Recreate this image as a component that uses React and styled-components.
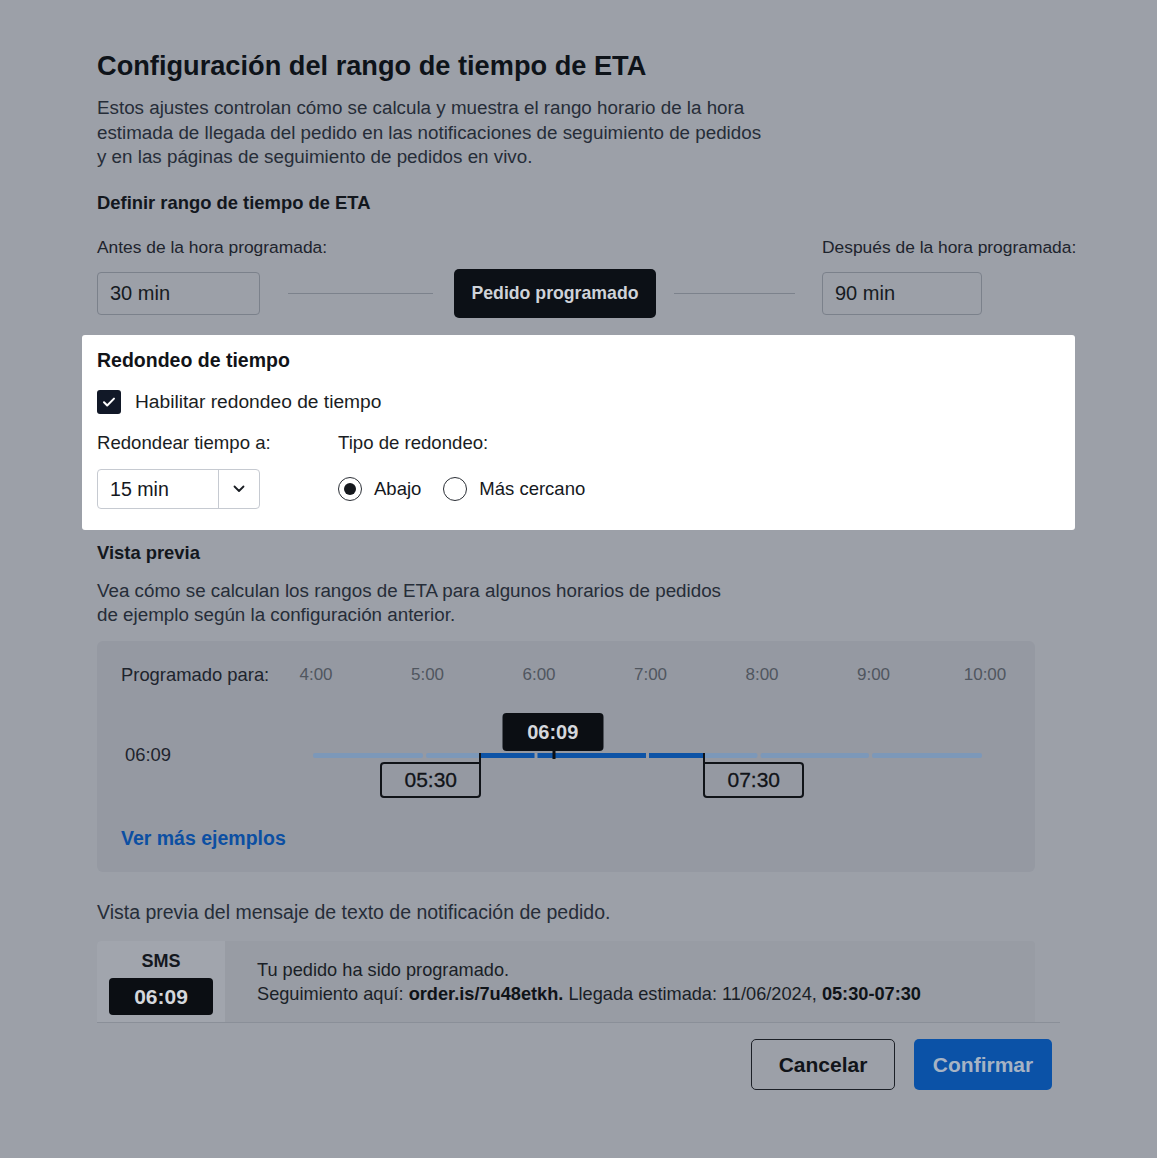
import React from "react";
import styled, { createGlobalStyle } from "styled-components";

const Global = createGlobalStyle`
  html, body { margin: 0; padding: 0; background: #9ca0a8; }
  body { font-family: "Liberation Sans", Arial, sans-serif; color: #1c222b; }
  * { box-sizing: border-box; }
`;

const Page = styled.div`
  width: 1157px;
  min-height: 1158px;
  padding: 50px 0 0 82px;
`;

const Column = styled.div`
  width: 993px;
`;

const Section = styled.div`
  padding: 0 15px;
`;

const Title = styled.h1`
  margin: 0;
  font-size: 27.2px;
  line-height: 32px;
  font-weight: 700;
  color: #0e1319;
`;

const Paragraph = styled.p`
  margin: ${(p) => p.$mt || 0}px 0 0;
  font-size: ${(p) => p.$fs || 18.8}px;
  line-height: ${(p) => p.$lh || 24}px;
  color: #262d38;
  white-space: nowrap;
`;

const Heading = styled.h2`
  margin: ${(p) => p.$mt || 0}px 0 0;
  font-size: ${(p) => p.$fs || 18.4}px;
  line-height: 24px;
  font-weight: 700;
  color: ${(p) => (p.$light ? "#111318" : "#13171d")};
`;

const LabelsRow = styled.div`
  margin-top: 22px;
  display: grid;
  grid-template-columns: 725px auto;
  font-size: 17.4px;
  line-height: 20px;
  color: #1e242d;
  white-space: nowrap;
`;

const ControlsRow = styled.div`
  margin-top: 12px;
  display: flex;
  align-items: center;
  height: 49px;
`;

const ValueBox = styled.div`
  width: ${(p) => p.$w}px;
  height: 43px;
  border: 1px solid #7b818b;
  border-radius: 4px;
  padding-left: 12px;
  display: flex;
  align-items: center;
  font-size: 20px;
  color: #161b22;
`;

const Connector = styled.div`
  width: ${(p) => p.$w}px;
  margin: 0 ${(p) => p.$mr}px 0 ${(p) => p.$ml}px;
  height: 1.5px;
  background: #7c828c;
`;

const DarkButton = styled.div`
  width: 202px;
  height: 49px;
  border-radius: 5px;
  background: #0c1016;
  color: #cfd3d9;
  font-size: 17.7px;
  font-weight: 700;
  display: flex;
  align-items: center;
  justify-content: center;
`;

const Highlight = styled.div`
  margin-top: 17px;
  background: #ffffff;
  border-radius: 3px;
  padding: 13px 15px 21px;
`;

const CheckRow = styled.label`
  margin-top: 18px;
  display: flex;
  align-items: center;
  gap: 14px;
  font-size: 19.2px;
  line-height: 24px;
  color: #1a1d23;
`;

const CheckBox = styled.span`
  width: 24px;
  height: 24px;
  border-radius: 3px;
  background: #111827;
  display: flex;
  align-items: center;
  justify-content: center;
`;

const FieldsRow = styled.div`
  margin-top: 18px;
  display: flex;
  gap: 78px;
`;

const Field = styled.div`
  width: ${(p) => p.$w || "auto"};
  display: flex;
  flex-direction: column;
  gap: 15px;
`;

const FieldLabel = styled.div`
  font-size: 18.6px;
  line-height: 22px;
  color: #1a1d23;
  white-space: nowrap;
`;

const Select = styled.div`
  width: 163px;
  height: 40px;
  border: 1px solid #c6cad1;
  border-radius: 4px;
  display: grid;
  grid-template-columns: 1fr 40px;
`;

const SelectValue = styled.div`
  display: flex;
  align-items: center;
  padding-left: 12px;
  font-size: 19.6px;
  color: #15181d;
  border-right: 1px solid #c6cad1;
`;

const SelectArrow = styled.div`
  display: flex;
  align-items: center;
  justify-content: center;
`;

const RadioGroup = styled.div`
  height: 40px;
  display: flex;
  align-items: center;
`;

const RadioOption = styled.label`
  display: flex;
  align-items: center;
  gap: 12px;
  margin-right: 22px;
  font-size: 18.5px;
  color: #15181d;
`;

const RadioCircle = styled.span`
  width: 24px;
  height: 24px;
  border-radius: 50%;
  border: 1.5px solid #2b2f36;
  display: flex;
  align-items: center;
  justify-content: center;
  &::after {
    content: "";
    width: 12px;
    height: 12px;
    border-radius: 50%;
    background: #15181d;
    display: ${(p) => (p.$checked ? "block" : "none")};
  }
`;

const TimelineCard = styled.div`
  margin-top: 14px;
  width: 938px;
  background: #9599a2;
  border-radius: 6px;
  padding: 24px 24px 23px;
`;

const ChartRow = styled.div`
  display: grid;
  grid-template-columns: 192px 669px;
  align-items: center;
  margin-top: ${(p) => p.$mt || 0}px;
`;

const RowLabel = styled.div`
  font-size: 18.4px;
  line-height: 20px;
  color: #1e242d;
  padding-left: ${(p) => p.$pl || 0}px;
`;

const Axis = styled.div`
  position: relative;
  height: 20px;
`;

const HourLabel = styled.span`
  position: absolute;
  top: 0;
  transform: translateX(-50%);
  font-size: 17px;
  line-height: 20px;
  color: #50565f;
  white-space: nowrap;
`;

const Canvas = styled.div`
  position: relative;
  height: 100px;
`;

const Track = styled.svg`
  position: absolute;
  left: 0;
  top: 48px;
  display: block;
`;

const Tooltip = styled.div`
  position: absolute;
  top: 8px;
  width: 101px;
  height: 38px;
  transform: translateX(-50%);
  background: #0b0e13;
  border-radius: 4px;
  color: #d4d7dc;
  font-size: 20px;
  font-weight: 700;
  display: flex;
  align-items: center;
  justify-content: center;
  &::after {
    content: "";
    position: absolute;
    left: 50%;
    bottom: -8px;
    width: 2.5px;
    height: 8px;
    background: #0b0e13;
  }
`;

const MarkerLine = styled.div`
  position: absolute;
  top: 48px;
  width: 2px;
  height: 11px;
  background: #101318;
`;

const MarkerBox = styled.div`
  position: absolute;
  top: 57px;
  width: 101px;
  height: 36px;
  border: 2px solid #101318;
  border-radius: ${(p) => (p.$side === "left" ? "4px 0 4px 4px" : "0 4px 4px 4px")};
  font-size: 21px;
  color: #111419;
  -webkit-text-stroke: 0.3px #111419;
  display: flex;
  align-items: center;
  justify-content: center;
`;

const MoreLink = styled.a`
  display: block;
  margin-top: 22px;
  font-size: 19.5px;
  line-height: 22px;
  font-weight: 700;
  color: #0c4fa2;
  text-decoration: none;
`;

const SmsCard = styled.div`
  margin-top: 19px;
  width: 938px;
  height: 81px;
  display: flex;
  background: #989ca4;
  border-radius: 4px 4px 0 0;
  overflow: hidden;
`;

const SmsSide = styled.div`
  width: 128px;
  background: #a1a5ad;
  display: flex;
  flex-direction: column;
  align-items: center;
  padding-top: 10px;
  gap: 6px;
`;

const SmsTag = styled.div`
  font-size: 18px;
  line-height: 21px;
  font-weight: 700;
  color: #14181e;
`;

const TimeBadge = styled.div`
  width: 104px;
  height: 37px;
  border-radius: 4px;
  background: #0b0e13;
  color: #d4d7dc;
  font-size: 21px;
  font-weight: 700;
  display: flex;
  align-items: center;
  justify-content: center;
`;

const SmsBody = styled.div`
  padding: 17px 0 0 32px;
  font-size: 18.2px;
  line-height: 24px;
  color: #1a1f27;
  white-space: nowrap;
  b { color: #0f1318; }
`;

const Footer = styled.div`
  width: 963px;
  border-top: 1px solid #8a8f98;
  padding: 16px 8px 0 0;
  display: flex;
  justify-content: flex-end;
  gap: 19px;
`;

const Button = styled.button`
  height: 51px;
  width: ${(p) => p.$w}px;
  border-radius: 5px;
  font-family: "Liberation Sans", Arial, sans-serif;
  font-size: 21px;
  font-weight: 700;
  cursor: pointer;
  border: ${(p) => (p.$primary ? "none" : "1.5px solid #1c2027")};
  background: ${(p) => (p.$primary ? "#0b52a7" : "transparent")};
  color: ${(p) => (p.$primary ? "#a6b3c4" : "#111419")};
`;

const HOUR = 111.5;
const TRACK_W = 669;
const hours = ["4:00", "5:00", "6:00", "7:00", "8:00", "9:00", "10:00"];

function TrackBar({ from, to }) {
  const segs = [];
  for (let i = 0; i < 6; i++) {
    const s = i * HOUR + (i > 0 ? 1.5 : 0);
    const e = i === 5 ? TRACK_W : (i + 1) * HOUR - 1.5;
    segs.push([s, e]);
  }
  return (
    <Track width={TRACK_W} height={5} viewBox={`0 0 ${TRACK_W} 5`}>
      {segs.map(([s, e], i) => (
        <rect key={"l" + i} x={s} y={0} width={e - s} height={5} rx={2} fill="#7c98b9" />
      ))}
      {segs.map(([s, e], i) => {
        const a = Math.max(s, from);
        const b = Math.min(e, to);
        if (b <= a) return null;
        return <rect key={"d" + i} x={a} y={0} width={b - a} height={5} fill="#0d53a6" />;
      })}
    </Track>
  );
}

export default function App() {
  const start = 1.5 * HOUR;
  const end = 3.5 * HOUR;
  const now = (2 + 9 / 60) * HOUR;
  return (
    <>
      <Global />
      <Page>
        <Column>
          <Section>
            <Title>Configuración del rango de tiempo de ETA</Title>
            <Paragraph $mt={14} $lh={24.5}>
              Estos ajustes controlan cómo se calcula y muestra el rango horario de la hora
              <br />
              estimada de llegada del pedido en las notificaciones de seguimiento de pedidos
              <br />y en las páginas de seguimiento de pedidos en vivo.
            </Paragraph>
            <Heading $mt={21.5}>Definir rango de tiempo de ETA</Heading>
            <LabelsRow>
              <span>Antes de la hora programada:</span>
              <span>Después de la hora programada:</span>
            </LabelsRow>
            <ControlsRow>
              <ValueBox $w={163}>30 min</ValueBox>
              <Connector $w={145} $ml={28} $mr={21} />
              <DarkButton>Pedido programado</DarkButton>
              <Connector $w={121} $ml={18} $mr={27} />
              <ValueBox $w={160}>90 min</ValueBox>
            </ControlsRow>
          </Section>

          <Highlight>
            <Heading $light $fs={19.5}>Redondeo de tiempo</Heading>
            <CheckRow>
              <CheckBox>
                <svg width="16" height="16" viewBox="0 0 16 16" fill="none">
                  <path d="M3 8.3l3.2 3.2L13 4.6" stroke="#fff" strokeWidth="2" strokeLinecap="round" strokeLinejoin="round" />
                </svg>
              </CheckBox>
              Habilitar redondeo de tiempo
            </CheckRow>
            <FieldsRow>
              <Field $w="163px">
                <FieldLabel>Redondear tiempo a:</FieldLabel>
                <Select>
                  <SelectValue>15 min</SelectValue>
                  <SelectArrow>
                    <svg width="12" height="8" viewBox="0 0 12 8" fill="none">
                      <path d="M1.5 1.5L6 6l4.5-4.5" stroke="#1a1d23" strokeWidth="1.8" strokeLinecap="round" strokeLinejoin="round" />
                    </svg>
                  </SelectArrow>
                </Select>
              </Field>
              <Field>
                <FieldLabel>Tipo de redondeo:</FieldLabel>
                <RadioGroup>
                  <RadioOption>
                    <RadioCircle $checked />
                    Abajo
                  </RadioOption>
                  <RadioOption>
                    <RadioCircle />
                    Más cercano
                  </RadioOption>
                </RadioGroup>
              </Field>
            </FieldsRow>
          </Highlight>

          <Section>
            <Heading $mt={11}>Vista previa</Heading>
            <Paragraph $mt={14}>
              Vea cómo se calculan los rangos de ETA para algunos horarios de pedidos
              <br />
              de ejemplo según la configuración anterior.
            </Paragraph>
            <TimelineCard>
              <ChartRow>
                <RowLabel>Programado para:</RowLabel>
                <Axis>
                  {hours.map((h, i) => (
                    <HourLabel key={h} style={{ left: i * HOUR + 3 }}>
                      {h}
                    </HourLabel>
                  ))}
                </Axis>
              </ChartRow>
              <ChartRow $mt={20}>
                <RowLabel $pl={4}>06:09</RowLabel>
                <Canvas>
                  <TrackBar from={start} to={end} />
                  <Tooltip style={{ left: now }}>06:09</Tooltip>
                  <MarkerLine style={{ left: start - 1 }} />
                  <MarkerBox $side="left" style={{ left: start + 1 - 101 }}>05:30</MarkerBox>
                  <MarkerLine style={{ left: end }} />
                  <MarkerBox $side="right" style={{ left: end }}>07:30</MarkerBox>
                </Canvas>
              </ChartRow>
              <MoreLink href="#">Ver más ejemplos</MoreLink>
            </TimelineCard>
            <Paragraph $mt={30} $lh={20} $fs={19.5}>
              Vista previa del mensaje de texto de notificación de pedido.
            </Paragraph>
            <SmsCard>
              <SmsSide>
                <SmsTag>SMS</SmsTag>
                <TimeBadge>06:09</TimeBadge>
              </SmsSide>
              <SmsBody>
                Tu pedido ha sido programado.
                <br />
                Seguimiento aquí: <b>order.is/7u48etkh.</b> Llegada estimada: 11/06/2024, <b>05:30-07:30</b>
              </SmsBody>
            </SmsCard>
            <Footer>
              <Button $w={144}>Cancelar</Button>
              <Button $w={138} $primary>
                Confirmar
              </Button>
            </Footer>
          </Section>
        </Column>
      </Page>
    </>
  );
}
